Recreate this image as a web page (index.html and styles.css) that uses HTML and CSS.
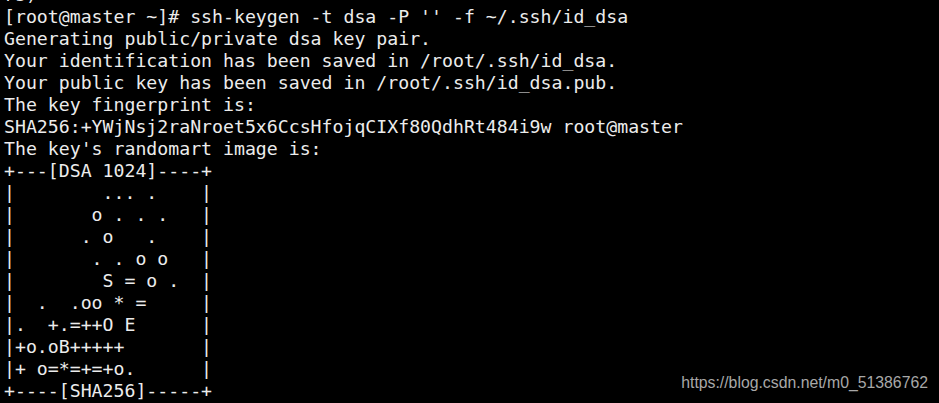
FILE: index.html
```html
<!DOCTYPE html>
<html>
<head>
<meta charset="utf-8">
<link rel="stylesheet" href="styles.css">
</head>
<body>
<div class="term">
<pre class="out">rs)
[root@master ~]# ssh-keygen -t dsa -P '' -f ~/.ssh/id_dsa
Generating public/private dsa key pair.
Your identification has been saved in /root/.ssh/id_dsa.
Your public key has been saved in /root/.ssh/id_dsa.pub.
The key fingerprint is:
SHA256:+YWjNsj2raNroet5x6CcsHfojqCIXf80QdhRt484i9w root@master
The key's randomart image is:
+---[DSA 1024]----+
|        ... .    |
|       o . . .   |
|      . o   .    |
|       . . o o   |
|        S = o .  |
|  .  .oo * =     |
|.  +.=++O E      |
|+o.oB+++++       |
|+ o=*=+=+o.      |
+----[SHA256]-----+</pre>
<div class="mark">https://blog.csdn.net/m0_51386762</div>
</div>
</body>
</html>
```
FILE: styles.css
```css
html, body {
  margin: 0;
  padding: 0;
  background: #000;
  overflow: hidden;
}
.term {
  position: relative;
  width: 939px;
  height: 403px;
  overflow: hidden;
  background: #000;
}
.out {
  margin: -16px 0 0 0;
  padding: 0 0 0 4px;
  font-family: "DejaVu Sans Mono", monospace;
  font-size: 18.2px;
  line-height: 22px;
  color: #ececec;
}
.mark {
  position: absolute;
  right: 11px;
  bottom: 11px;
  font-family: "Liberation Sans", Arial, sans-serif;
  font-size: 15.8px;
  line-height: 18px;
  color: #a8a8a8;
}
```
